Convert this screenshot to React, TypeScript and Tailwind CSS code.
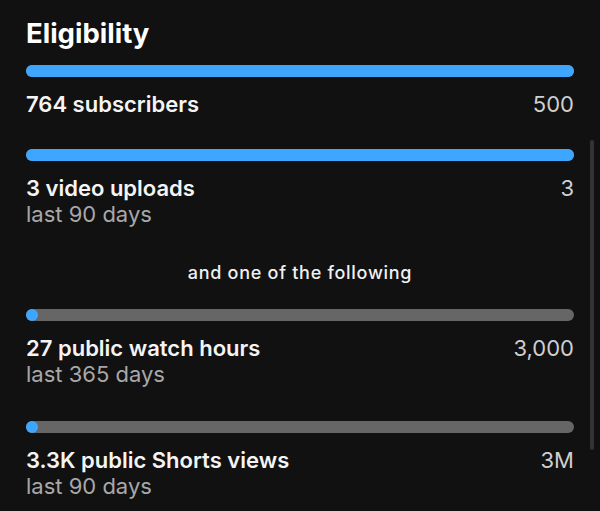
const items = [
  { label: "764 subscribers", target: "500", sub: null, pct: 100 },
  { label: "3 video uploads", target: "3", sub: "last 90 days", pct: 100 },
];

const either = [
  { label: "27 public watch hours", target: "3,000", sub: "last 365 days", pct: 0 },
  { label: "3.3K public Shorts views", target: "3M", sub: "last 90 days", pct: 0 },
];

function Bar({ pct }: { pct: number }) {
  return (
    <div className="relative h-3 w-full rounded-full bg-[#666666]">
      {pct > 0 ? (
        <div className="h-3 rounded-full bg-[#3ea6ff]" style={{ width: `${pct}%` }} />
      ) : (
        <div className="h-3 w-3 rounded-full bg-[#3ea6ff]" />
      )}
    </div>
  );
}

function Row({ item }: { item: (typeof items)[number] }) {
  return (
    <div className="flex flex-col">
      <Bar pct={item.pct} />
      <div className="mt-[14px] flex items-start justify-between">
        <div className="flex flex-col">
          <span className="text-[22px] leading-[26px] font-semibold text-[#f4f4f4]">
            {item.label}
          </span>
          {item.sub && (
            <span className="text-[22px] leading-[26px] text-[#a8a8a8]">{item.sub}</span>
          )}
        </div>
        <span className="text-[22px] leading-[26px] text-[#cfcfcf]">{item.target}</span>
      </div>
    </div>
  );
}

export default function App() {
  return (
    <div
      className="relative h-[511px] w-[600px] overflow-hidden bg-[#111111] px-[26px] pt-[17px]"
      style={{ fontFamily: "Inter, 'Noto Sans', sans-serif" }}
    >
      <h1 className="text-[27.5px] leading-[32px] font-bold text-white">Eligibility</h1>

      <div className="mt-[16px] flex flex-col gap-[32px]">
        {items.map((it) => (
          <Row key={it.label} item={it} />
        ))}
      </div>

      <p className="mt-[35px] text-center text-[18px] leading-[22px] font-medium tracking-[0.04em] text-[#f0f0f0]">
        and one of the following
      </p>

      <div className="mt-[25px] flex flex-col gap-[34px]">
        {either.map((it) => (
          <Row key={it.label} item={it} />
        ))}
      </div>

      <div className="absolute right-[6px] top-[140px] h-[310px] w-[4px] rounded-full bg-[#333333]" />
    </div>
  );
}
